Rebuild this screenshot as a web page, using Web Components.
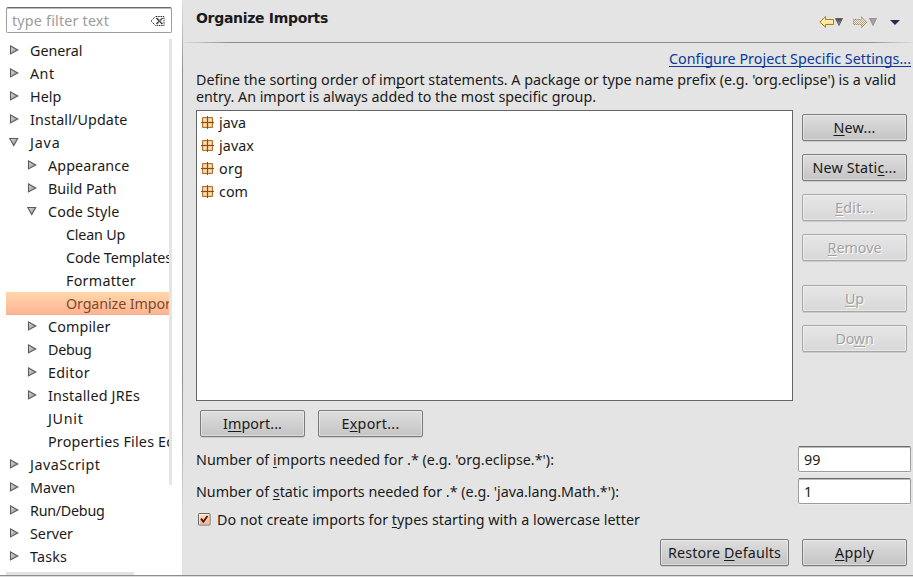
<!DOCTYPE html>
<html lang="en"><head><meta charset="utf-8"><title>Preferences</title>
<style>
html,body{margin:0;width:913px;height:577px;overflow:hidden;background:#e4e4e4}
body{font:14.3px/17px "Noto Sans","Open Sans",sans-serif;color:#1a1a1a}
u{text-decoration:underline;text-decoration-thickness:1px;text-underline-offset:2px;text-decoration-skip-ink:none}
</style></head><body>
<pref-window>
<pref-tree slot="nav"></pref-tree>
<import-page></import-page>
</pref-window>
<script>
const U='u{text-decoration:underline;text-decoration-thickness:1px;text-underline-offset:2px;text-decoration-skip-ink:none}';
class Base extends HTMLElement{
  connectedCallback(){ if(this.shadowRoot)return; this.attachShadow({mode:'open'}).innerHTML='<style>*{box-sizing:border-box}'+U+'</style>'+this.view(); this.ready&&this.ready(); }
}
/* Text run spaced so that it fills the width given in "w". */
customElements.define('fit-text',class extends Base{
  view(){return '<style>:host{display:inline-block;white-space:nowrap}span{display:inline-block}</style><span><slot></slot></span>'}
  ready(){
    const s=this.shadowRoot.querySelector('span'),w=+this.getAttribute('w'),n=this.textContent.length;
    this.style.width=w+'px';
    s.style.letterSpacing=(w-s.getBoundingClientRect().width)/n+'px';
  }
});
customElements.define('pref-window',class extends Base{
  view(){return `<style>:host{display:flex;flex-direction:column;width:913px;height:577px}
  .b{display:grid;grid-template-columns:182px 1px 1fr;height:575px}
  .d{background:linear-gradient(#e0e0e0,#929292 70px,#929292 380px,#e0e0e0 530px)}
  .f{height:2px;border-top:1px solid #8e8e8e;background:#dcdcdc}</style>
  <div class="b"><slot name="nav"></slot><div class="d"></div><slot></slot></div><div class="f"></div>`}
});
customElements.define('tree-row',class extends Base{
  view(){
    const l=+this.getAttribute('level'),s=this.getAttribute('state');
    const g='<defs><linearGradient id="g" x2="1" y2="1"><stop stop-color="#e4e4e4"/><stop offset="1" stop-color="#808080"/></linearGradient></defs>';
    const p=s==='open'?'M.8 1.5H8.7L4.75 8.6Z':'M1.5 .9V8.9L8.8 4.9Z';
    return `<style>:host{display:flex;align-items:center;height:23px;padding-left:${3+18*l}px;overflow:hidden}
    :host([selected]){background:linear-gradient(#ffd7aa,#ffb594 94%,#f7a77f);color:#7c4a2a}
    svg{width:10px;height:10px;margin-right:11px;flex:none;position:relative;top:-1px}</style>
    <svg viewBox="0 0 10 10">${s?g+`<path d="${p}" fill="url(#g)" stroke="#5c5c5c" stroke-width="1.1"/>`:''}</svg>
    <fit-text w="${this.getAttribute('w')}">${this.textContent}</fit-text><style>fit-text{flex:none}</style>`}
});
customElements.define('pref-tree',class extends Base{
  view(){
    const R=[['General',0,52.5,'c'],['Ant',0,24.5,'c'],['Help',0,31.5,'c'],['Install/Update',0,97.5,'c'],['Java',0,30.5,'open'],['Appearance',1,81.5,'c'],['Build Path',1,68.5,'c'],['Code Style',1,71.5,'open'],['Clean Up',2,59,''],['Code Templates',2,106,''],['Formatter',2,70,''],['Organize Imports',2,116.500,''],['Compiler',1,62.5,'c'],['Debug',1,43.5,'c'],['Editor',1,42,'c'],['Installed JREs',1,92,'c'],['JUnit',1,35.5,''],['Properties Files Editor',1,151.5,''],['JavaScript',0,70.5,'c'],['Maven',0,45,'c'],['Run/Debug',0,74.5,'c'],['Server',0,43,'c'],['Tasks',0,37,'c']];
    return `<style>:host{display:flex;flex-direction:column;background:#fff;padding:7px 0 0 6px;overflow:hidden}
    .q{width:166px;height:26px;display:flex;align-items:center;justify-content:space-between;padding:0 6px 0 5px;border:1px solid #9d9d9d;border-top:1px solid #6c6c6c;border-radius:2px;box-shadow:inset 0 1px #bbb;color:#9c9c9c}
    .q svg{position:relative;top:1px}
    .w{display:grid;grid-template-columns:163px 3px;height:533px;margin-top:6px}.t{overflow:hidden}.v{background:#e4e4e4;height:446px}.h{width:128px;height:3px;background:#e2e2e2}</style>
    <div class="q"><fit-text w="97">type filter text</fit-text><svg width="15" height="12" viewBox="0 0 15 12"><path d="M5.5 1.5L1 6l4.500 4.500h8.500v-9Z" fill="none" stroke="#333" stroke-dasharray="1.5 .8"/><path d="M6.500 3l6 6m0-6l-6 6" stroke="#333" stroke-width="1.700"/><path d="M7.500 2.500l5 6m0-6l-5 6" stroke="#fff" stroke-width=".4"/></svg></div>
    <div class="w"><div class="t">${R.map(([n,l,w,s])=>`<tree-row level="${l}" w="${w}" state="${s}" ${n==='Organize Imports'?'selected':''}>${n}</tree-row>`).join('')}</div><div class="v"></div></div><div class="h"></div>`}
});
customElements.define('push-button',class extends Base{
  view(){return `<style>:host{display:flex;align-items:center;justify-content:center;box-sizing:border-box;width:105px;height:27px;padding-bottom:1px;border:1px solid #7b7b7b;border-radius:2px;background:linear-gradient(#dedede,#c4c4c4);box-shadow:inset 0 0 0 1px rgba(255,255,255,.4),0 1px rgba(0,0,0,.1)}
  :host([off]){border-color:#a8a8a8;color:#a2a2a2;text-shadow:1px 1px #fff;background:linear-gradient(#e6e6e6,#d8d8d8)}</style><slot></slot>`}
});
customElements.define('text-field',class extends Base{
  view(){return `<style>:host{display:flex;align-items:center;box-sizing:border-box;width:113px;height:26px;padding-left:5px;background:#fff;border:1px solid #9d9d9d;border-top-color:#6c6c6c;border-radius:2px;box-shadow:inset 0 1px #bbb,0 1px #eee}</style><slot></slot>`}
});
customElements.define('package-item',class extends Base{
  view(){return `<style>:host{display:flex;align-items:center;height:23px;padding-left:4px;gap:5px}</style>
  <svg width="13" height="13" viewBox="0 0 13 13"><path d="M1.500 1.500h10v10h-10z" fill="#efc88f" stroke="#bd6c25"/><path d="M3 3h2v2H3zM8 3h2v2H8zM3 8h2v2H3zM8 8h2v2H8z" fill="#fbe6c2"/><path d="M6.500 0v13M0 6.500h13" stroke="#8b4727"/></svg><slot></slot>`}
});
customElements.define('nav-arrows',class extends Base{
  view(){return `<style>:host{display:block;width:84px;height:14px}svg{display:block}</style>
  <svg width="84" height="14" viewBox="0 0 84 14"><defs><linearGradient id="y" x2="0" y2="1"><stop stop-color="#fffbe0"/><stop offset="1" stop-color="#ffd766"/></linearGradient><linearGradient id="k" x2="0" y2="1"><stop stop-color="#454545"/><stop offset="1" stop-color="#a0a0a0"/></linearGradient><pattern id="p" width="2" height="2" patternUnits="userSpaceOnUse"><path d="M0 0h1v1H0zM1 1h1v1H1z" fill="#a58a63"/></pattern></defs>
  <path d="M.9 7L6.500 1.600V4.500H14.500V9.500H6.500V12.400Z" fill="url(#y)" stroke="#b27a12" stroke-linejoin="round"/>
  <path d="M16.500 3.500h7L20 10.500z" fill="url(#k)" stroke="#555" stroke-width=".8"/>
  <path d="M48.100 7L42.500 1.600V4.500H34.500V9.500H42.500V12.400Z" fill="#eee9de" stroke="#d4c8b2"/><path d="M48.100 7L42.500 1.600V4.500H34.500V9.500H42.500V12.400Z" fill="url(#p)" fill-opacity=".7" stroke="url(#p)"/>
  <path d="M50.500 3.500h7L54 10.500z" fill="#a2a2a2" stroke="#8a8a8a" stroke-width=".8"/>
  <path d="M71 5h10l-5 5z" fill="#2c2851"/></svg>`}
});
customElements.define('check-option',class extends Base{
  view(){return `<style>:host{display:flex;align-items:center;gap:6px;height:17px}</style><svg width="13" height="13" viewBox="0 0 13 13"><defs><linearGradient id="o" x2="0" y2="1"><stop stop-color="#ffdfbf"/><stop offset="1" stop-color="#ffb087"/></linearGradient></defs><rect x=".5" y=".5" width="11.500" height="11.500" rx=".8" fill="#fff" stroke="#666"/><rect x="1.500" y="1.500" width="9.500" height="9.500" fill="url(#o)"/><path d="M3 5.700l2.300 3L9.500 3" fill="none" stroke="#40221c" stroke-width="1.900"/></svg><slot></slot>`}
});
customElements.define('import-page',class extends Base{
  view(){return `<style>:host{display:flex;flex-direction:column;min-width:0}
  header{height:42px;display:flex;justify-content:space-between;padding:9px 10px 0 13px}
  header b{font:bold 14px/18px "DejaVu Sans",sans-serif}nav-arrows{margin-top:6px}
  .r{height:1px;margin-left:1px;background:linear-gradient(90deg,#ddd,#8e8e8e 45px,#8e8e8e 685px,#e0e0e0)}
  .c{padding:7px 2px 0 13px}.l{display:flex;justify-content:flex-end;color:#0a3a9e;height:21px}
  .p{height:39px;display:flex;flex-direction:column}.g{display:grid;grid-template-columns:597px 105px;gap:9px}
  .s{height:291px;background:#fff;border:1px solid #666}
  .k{display:flex;flex-direction:column;gap:13px;padding-top:4px}.k .m{margin-top:11px}
  .x{display:flex;align-items:flex-start;gap:13px;padding:9px 0 0 4px;height:45px}
  .n{display:flex;justify-content:space-between;height:26px;align-items:center;margin-bottom:6px}
  check-option{margin:7px 0 0 2px}.z{display:flex;justify-content:flex-end;gap:13px;padding:11px 4px 0 0}.z .d{width:129px}</style>
  <header><b><fit-text w="132">Organize Imports</fit-text></b><nav-arrows></nav-arrows></header><div class="r"></div>
  <div class="c"><div class="l"><fit-text w="242"><u>Configure Project Specific Settings...</u></fit-text></div>
  <div class="p"><fit-text w="700">Define the sorting order of im<u>p</u>ort statements. A package or type name prefix (e.g. 'org.eclipse') is a valid</fit-text><fit-text w="400">entry. An import is always added to the most specific group.</fit-text></div>
  <div class="g"><div class="s"><package-item><fit-text w="27">java</fit-text></package-item><package-item><fit-text w="35">javax</fit-text></package-item><package-item><fit-text w="24">org</fit-text></package-item><package-item><fit-text w="29">com</fit-text></package-item></div>
  <div class="k"><push-button><fit-text w="42"><u>N</u>ew...</fit-text></push-button><push-button><fit-text w="84">New Stati<u>c</u>...</fit-text></push-button><push-button off><fit-text w="39"><u>E</u>dit...</fit-text></push-button><push-button off><fit-text w="54"><u>R</u>emove</fit-text></push-button><push-button off class="m"><fit-text w="19"><u>U</u>p</fit-text></push-button><push-button off><fit-text w="38">Do<u>w</u>n</fit-text></push-button></div></div>
  <div class="x"><push-button><fit-text w="59">I<u>m</u>port...</fit-text></push-button><push-button><fit-text w="58">E<u>x</u>port...</fit-text></push-button></div>
  <div class="n"><fit-text w="358">Number of <u>i</u>mports needed for .* (e.g. 'org.eclipse.*'):</fit-text><text-field><fit-text w="16.5">99</fit-text></text-field></div>
  <div class="n"><fit-text w="423">Number of <u>s</u>tatic imports needed for .* (e.g. 'java.lang.Math.*'):</fit-text><text-field><fit-text w="8">1</fit-text></text-field></div>
  <check-option><fit-text w="423">Do not create imports for <u>t</u>ypes starting with a lowercase letter</fit-text></check-option>
  <div class="z"><push-button class="d"><fit-text w="113">Restore <u>D</u>efaults</fit-text></push-button><push-button><fit-text w="39"><u>A</u>pply</fit-text></push-button></div></div>`}
});
</script></body></html>
